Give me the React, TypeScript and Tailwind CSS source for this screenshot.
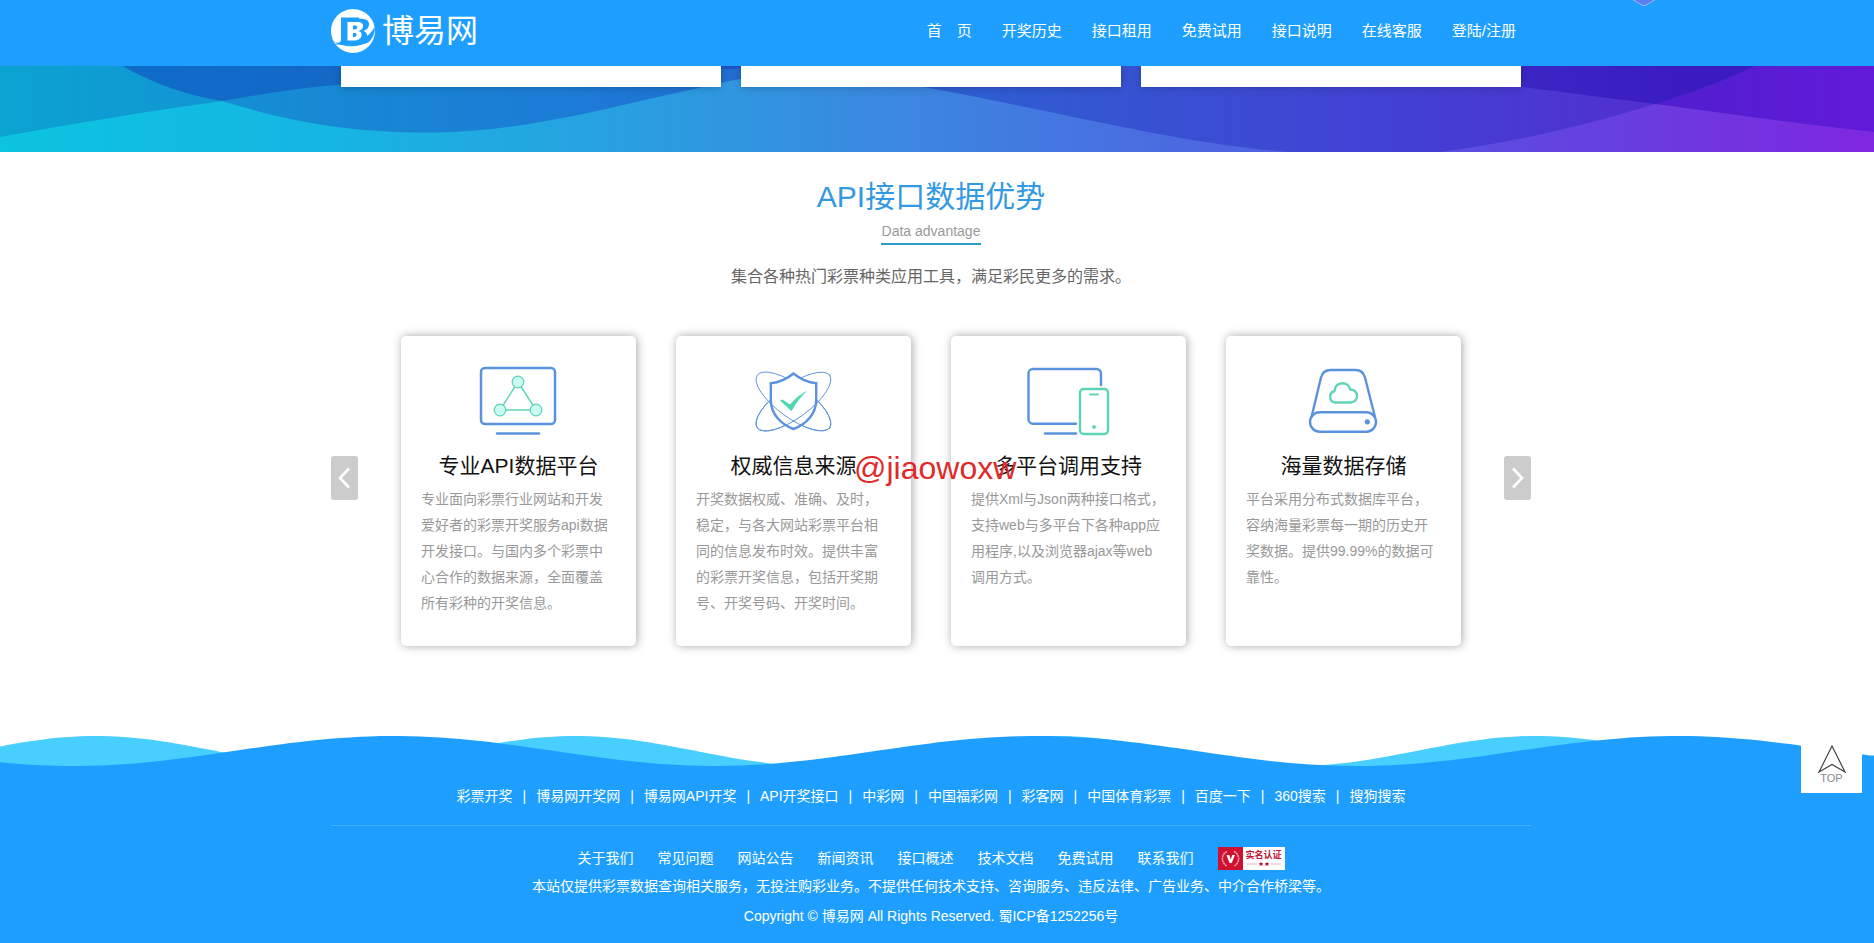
import type { ReactNode } from "react";

const navItems = ["首　页", "开奖历史", "接口租用", "免费试用", "接口说明", "在线客服", "登陆/注册"];

const friendLinks = [
  "彩票开奖",
  "博易网开奖网",
  "博易网API开奖",
  "API开奖接口",
  "中彩网",
  "中国福彩网",
  "彩客网",
  "中国体育彩票",
  "百度一下",
  "360搜索",
  "搜狗搜索",
];

const footerLinks = [
  "关于我们",
  "常见问题",
  "网站公告",
  "新闻资讯",
  "接口概述",
  "技术文档",
  "免费试用",
  "联系我们",
];

const BLUE = "#5b92dd";
const GREEN = "#5fd3b5";

function IconBox({ children }: { children: ReactNode }) {
  return (
    <svg
      viewBox="0 0 100 80"
      className="mx-auto h-20 w-[100px]"
      fill="none"
      strokeLinecap="round"
      strokeLinejoin="round"
      aria-hidden="true"
    >
      {children}
    </svg>
  );
}

function PlatformIcon() {
  return (
    <IconBox>
      <rect x="12" y="8" width="74" height="56" rx="4" stroke={BLUE} strokeWidth="2.5" />
      <path d="M28 73.5H70" stroke={BLUE} strokeWidth="2.4" />
      <path d="M49 22L31 50H67Z" stroke={GREEN} strokeWidth="1.4" />
      <g stroke={GREEN} strokeWidth="1.2" fill="#c9fbf0">
        <circle cx="49" cy="22" r="5.8" />
        <circle cx="31" cy="50" r="5.8" />
        <circle cx="67" cy="50" r="5.8" />
      </g>
    </IconBox>
  );
}

function ShieldIcon() {
  const shield =
    "M49.5 13.5C43.5 18.5 35.5 22.5 26.8 23.2V40C26.8 54 37 64.5 49.5 69C62 64.5 72.2 54 72.2 40V23.2C63.5 22.5 55.5 18.5 49.5 13.5Z";
  const orbits = (
    <g stroke={BLUE} strokeWidth="0.9">
      <ellipse cx="49.5" cy="41.5" rx="44.8" ry="16.4" transform="rotate(36 49.5 41.5)" />
      <ellipse cx="49.5" cy="41.5" rx="44.8" ry="16.4" transform="rotate(-36 49.5 41.5)" />
    </g>
  );
  return (
    <IconBox>
      <clipPath id="shield-lower">
        <rect x="0" y="42" width="100" height="38" />
      </clipPath>
      {orbits}
      <path d={shield} fill="#fff" stroke={BLUE} strokeWidth="2.4" strokeLinejoin="miter" />
      <g clipPath="url(#shield-lower)">{orbits}</g>
      <path d="M36 40.5L38.5 39.5L46 44.5Q53.5 35.5 63.5 30.5Q54 39 47.5 51.3Z" fill="#4fd8b4" />
    </IconBox>
  );
}

function DevicesIcon() {
  return (
    <IconBox>
      <path
        d="M57 63.7H14A4.5 4.5 0 0 1 9.500 59.2V13.5A4.5 4.5 0 0 1 14 9H77.500A4.500 4.500 0 0 1 82 13.500V25"
        stroke={BLUE}
        strokeWidth="2.4"
      />
      <path d="M26 73.5H57" stroke={BLUE} strokeWidth="2.4" />
      <rect x="61" y="29" width="28" height="45" rx="3.5" stroke={GREEN} strokeWidth="2.4" />
      <path d="M71 34.5H79" stroke={GREEN} strokeWidth="2" />
      <circle cx="75" cy="67" r="1.9" fill={GREEN} />
    </IconBox>
  );
}

function StorageIcon() {
  return (
    <IconBox>
      <path
        d="M17.5 57L27 17.5Q29 10 36.5 10H61.5Q69 10 71 17.5L81 57"
        stroke={BLUE}
        strokeWidth="2.4"
      />
      <rect x="16" y="52.3" width="66" height="19.4" rx="9.7" stroke={BLUE} strokeWidth="2.4" />
      <circle cx="73.3" cy="61.8" r="2.6" fill={BLUE} />
      <path
        d="M41 42.5A5.9 5.9 0 0 1 40.5 31C40.5 26.5 44 23.2 48.3 23.2C52.3 23.2 55.5 25.8 56.2 29.5A6.5 6.5 0 1 1 57 42.5Z"
        stroke={GREEN}
        strokeWidth="2.4"
      />
    </IconBox>
  );
}

const advantages = [
  {
    icon: <PlatformIcon />,
    title: "专业API数据平台",
    text: "专业面向彩票行业网站和开发爱好者的彩票开奖服务api数据开发接口。与国内多个彩票中心合作的数据来源，全面覆盖所有彩种的开奖信息。",
  },
  {
    icon: <ShieldIcon />,
    title: "权威信息来源",
    text: "开奖数据权威、准确、及时，稳定，与各大网站彩票平台相同的信息发布时效。提供丰富的彩票开奖信息，包括开奖期号、开奖号码、开奖时间。",
  },
  {
    icon: <DevicesIcon />,
    title: "多平台调用支持",
    text: "提供Xml与Json两种接口格式，支持web与多平台下各种app应用程序,以及浏览器ajax等web调用方式。",
  },
  {
    icon: <StorageIcon />,
    title: "海量数据存储",
    text: "平台采用分布式数据库平台，容纳海量彩票每一期的历史开奖数据。提供99.99%的数据可靠性。",
  },
];

function Logo() {
  return (
    <a href="#home" className="flex items-center gap-[7px] text-white">
      <svg viewBox="0 0 44 44" className="size-11" aria-hidden="true">
        <circle cx="22" cy="22" r="22" fill="#fff" />
        <path d="M10 8.5H28C35 8.5 38.5 11.5 38 16C37.6 19 35.5 21 32.5 22C36 23.5 37 26 35.5 29C33.5 33.5 28 35.5 20 35.5H2.5C6 34.5 9.5 33.5 10 31.5Z" fill="#1e9fff" />
        <path d="M28 8C35 8.5 39 11 41.5 15C38 11.5 35 10 28 9.5Z" fill="#fff" />
        <path d="M2 32C16 38 34 35 44 17.5C44 24 42 29 38 33C28 38.5 12 39 2 32Z" fill="#1e9fff" />
        <path d="M16.5 13H26.5C30.5 13 32.5 14.5 32 17.5C31.6 20 29.8 21.5 27 22C30 22.5 31 24 30.5 26.5C30 30 27 31.5 23 31.5H16.5Z" fill="#fff" />
        <path d="M22 16.5H24.5Q26.5 16.5 26.3 18.5Q26 20.5 24 20.5H22ZM22 24H24Q26 24 25.7 26Q25.3 28 23.3 28H22Z" fill="#1e9fff" />
      </svg>
      <span className="text-[32px] leading-[44px]">博易网</span>
    </a>
  );
}

function Header() {
  return (
    <header className="relative bg-[#1e9fff] pr-3">
      <div className="mx-auto flex h-[66px] max-w-[1200px] items-start justify-between pt-[9px]">
        <Logo />
        <nav className="flex">
          {navItems.map((item) => (
            <a key={item} href="#nav" className="px-[15px] text-[15px] leading-[44px] text-white">
              {item}
            </a>
          ))}
        </nav>
      </div>
      <svg viewBox="0 0 24 7" className="absolute top-0 right-[218px] h-[7px] w-6" aria-hidden="true">
        <path d="M0 -1L10 5Q12 6.5 14 5L24 -1" fill="#5b7cf0" stroke="#a9b6f8" />
      </svg>
    </header>
  );
}

function Banner() {
  const lineA =
    "M0 -20C50 -20 90 -18 122 0C155 18 185 29 222 35C290 56 350 66.5 425 66.5C530 66.5 620 38 690 24C740 12 770 6 800 6C850 6 890 15 940 24C1060 46 1180 78 1290 86H1440C1530 74 1600 55 1655 38C1700 24 1730 12 1755 0L1800 -20H1874V86H0Z";
  const lineB =
    "M0 71C70 58 150 45 222 35C270 27 310 20 350 18C480 8 600 3 721 3C900 -4 1300 -10 1523 21C1570 27 1610 32 1655 38C1730 48 1800 58 1874 66V86H0Z";
  return (
    <section className="relative pr-3">
      <svg
        viewBox="0 0 1874 86"
        preserveAspectRatio="none"
        className="absolute inset-0 h-full w-full"
        aria-hidden="true"
      >
        <defs>
          <linearGradient id="sky" gradientUnits="userSpaceOnUse" x1="0" y1="0" x2="1874" y2="0">
            <stop offset="0.08" stopColor="#0f6cc8" />
            <stop offset="0.2" stopColor="#1468c4" />
            <stop offset="0.4" stopColor="#1f4fc6" />
            <stop offset="0.7" stopColor="#3a35c8" />
            <stop offset="0.9" stopColor="#3a1bc0" />
          </linearGradient>
          <linearGradient id="layer-a" gradientUnits="userSpaceOnUse" x1="0" y1="0" x2="1874" y2="0">
            <stop offset="0" stopColor="#0aa3d0" />
            <stop offset="0.12" stopColor="#1295d4" />
            <stop offset="0.5" stopColor="#3a66d8" />
            <stop offset="0.86" stopColor="#4c20cc" />
            <stop offset="1" stopColor="#611ad8" />
          </linearGradient>
          <linearGradient id="layer-b" gradientUnits="userSpaceOnUse" x1="0" y1="0" x2="1874" y2="0">
            <stop offset="0.1" stopColor="#1490d2" />
            <stop offset="0.3" stopColor="#1c7cd6" />
            <stop offset="0.42" stopColor="#236ad0" />
            <stop offset="0.6" stopColor="#3653d2" />
            <stop offset="0.75" stopColor="#4340d4" />
            <stop offset="0.88" stopColor="#5030cf" />
          </linearGradient>
          <linearGradient id="layer-both" gradientUnits="userSpaceOnUse" x1="0" y1="0" x2="1874" y2="0">
            <stop offset="0" stopColor="#0cc4df" />
            <stop offset="0.18" stopColor="#16b5e2" />
            <stop offset="0.35" stopColor="#2b9de0" />
            <stop offset="0.48" stopColor="#3b87e0" />
            <stop offset="0.62" stopColor="#4a6ce0" />
            <stop offset="0.82" stopColor="#6046df" />
            <stop offset="1" stopColor="#7e27df" />
          </linearGradient>
          <clipPath id="clip-a">
            <path d={lineA} />
          </clipPath>
        </defs>
        <rect width="1874" height="86" fill="url(#sky)" />
        <path d={lineA} fill="url(#layer-a)" />
        <path d={lineB} fill="url(#layer-b)" />
        <path d={lineB} fill="url(#layer-both)" clipPath="url(#clip-a)" />
      </svg>
      <div className="relative mx-auto grid h-[86px] max-w-[1200px] grid-cols-3 gap-5 overflow-hidden px-[10px]">
        <div className="h-[21px] bg-white shadow-[0_0_8px_rgba(0,0,0,0.25)]" />
        <div className="h-[21px] bg-white shadow-[0_0_8px_rgba(0,0,0,0.25)]" />
        <div className="h-[21px] bg-white shadow-[0_0_8px_rgba(0,0,0,0.25)]" />
      </div>
    </section>
  );
}

function ArrowButton({ label, d }: { label: string; d: string }) {
  return (
    <button
      type="button"
      aria-label={label}
      className="mt-[120px] flex h-11 w-[27px] items-center justify-center rounded-[3px] bg-[#ccc]"
    >
      <svg viewBox="0 0 14 24" className="h-6 w-[14px]" fill="none" stroke="#fff" strokeWidth="2.6" aria-hidden="true">
        <path d={d} />
      </svg>
    </button>
  );
}

function Advantages() {
  return (
    <section className="pt-[23px] pr-3 pb-[90px] text-center">
      <h2 className="text-[30px] leading-[44px] text-[#3399e0]">API接口数据优势</h2>
      <p className="mx-auto w-[100px] border-b-2 border-[#2f9ac4] text-sm leading-6 text-[#999]">
        Data advantage
      </p>
      <p className="mt-5 text-base leading-6 text-[#666]">
        集合各种热门彩票种类应用工具，满足彩民更多的需求。
      </p>

      <div className="relative mx-auto mt-[47px] flex max-w-[1200px] items-start justify-between">
        <ArrowButton label="上一页" d="M11 2.5L2 12L11 21.5" />
        <div className="grid grid-cols-4 gap-10">
          {advantages.map((a) => (
            <article
              key={a.title}
              className="h-[310px] w-[235px] rounded-[5px] bg-white px-5 pt-6 shadow-[1px_0_10px_rgba(0,0,0,0.35)]"
            >
              {a.icon}
              <h3 className="mt-[6px] text-[21px] leading-10 text-[#111]">{a.title}</h3>
              <p className="text-left text-sm leading-[26px] text-[#999]">{a.text}</p>
            </article>
          ))}
        </div>
        <ArrowButton label="下一页" d="M2 2.5L11 12L2 21.5" />
        <span className="absolute top-[110px] left-[523px] text-[32px] leading-[44px] text-[#e02a2a]">
          @jiaowoxw
        </span>
      </div>
    </section>
  );
}

// cosine wave filled down to the bottom edge, crest at `crest`
function wavePath(crest: number, period: number) {
  let d = "M0 30";
  for (let x = 0; x <= 1880; x += 10) {
    const y = 15 - 15 * Math.cos(((x - crest) / period) * Math.PI * 2);
    d += `L${x} ${y.toFixed(1)}`;
  }
  return `${d}L1880 30Z`;
}

function RealNameBadge() {
  return (
    <a href="#verify" aria-label="实名认证" className="flex h-[23px] w-[67px] bg-white">
      <svg viewBox="0 0 25 23" className="h-[23px] w-[25px]" aria-hidden="true">
        <rect width="25" height="23" fill="#cf1030" />
        <path d="M9 4.5A8 8 0 0 0 9 19M16 4.5A8 8 0 0 1 16 19" fill="none" stroke="#f0a0ac" strokeWidth="1.6" strokeDasharray="2 0.6" />
        <path d="M8.500 8H11.300L12.700 12.500L14.300 8H17L13.700 16H11.500Z" fill="#fff" />
      </svg>
      <span className="flex flex-1 flex-col items-center pt-[3px]">
        <span className="text-[9px] leading-[11px] font-bold whitespace-nowrap text-[#c41230]">实名认证</span>
        <svg viewBox="0 0 38 5" className="h-[5px] w-[38px]" aria-hidden="true">
          <path d="M2 3H12M26 3H36" stroke="#e6a0a8" strokeWidth="0.8" />
          <path d="M16 1l1 1.2 1.2 0.3-1 1 0.2 1.5-1.4-0.7-1.4 0.7 0.2-1.5-1-1 1.2-0.3zM22 1l1 1.2 1.2 0.3-1 1 0.2 1.5-1.4-0.7-1.4 0.7 0.2-1.5-1-1 1.2-0.3z" fill="#c41230" />
        </svg>
      </span>
    </a>
  );
}

function Footer() {
  return (
    <footer>
      <svg viewBox="0 0 1874 30" preserveAspectRatio="none" className="block h-[30px] w-full" aria-hidden="true">
        <path d={wavePath(96, 480)} fill="#48cfff" />
        <path d={wavePath(394, 642)} fill="#1e9fff" />
      </svg>
      <div className="bg-[#1e9fff] pt-[18px] pr-3 pb-[15px] text-sm leading-6 text-white">
        <div className="mx-auto max-w-[1200px]">
          <div className="flex justify-center gap-[10px]">
            {friendLinks.map((link, i) => (
              <span key={link} className="flex gap-[10px]">
                {i > 0 && <span>|</span>}
                <a href="#friend">{link}</a>
              </span>
            ))}
          </div>
          <hr className="mt-[17px] border-[#45b0ff]" />
          <div className="mt-5 flex items-center justify-center gap-6">
            {footerLinks.map((link) => (
              <a key={link} href="#footer">
                {link}
              </a>
            ))}
            <RealNameBadge />
          </div>
          <p className="mt-1 text-center">
            本站仅提供彩票数据查询相关服务，无投注购彩业务。不提供任何技术支持、咨询服务、违反法律、广告业务、中介合作桥梁等。
          </p>
          <p className="mt-[6px] text-center">Copyright © 博易网 All Rights Reserved. 蜀ICP备1252256号</p>
        </div>
      </div>
    </footer>
  );
}

export default function App() {
  return (
    <div className="bg-white font-['Liberation_Sans','Noto_Sans_CJK_SC',sans-serif]">
      <Header />
      <Banner />
      <Advantages />
      <Footer />
      <button
        type="button"
        className="fixed right-3 bottom-[150px] flex size-[61px] flex-col items-center bg-white pt-3 text-[11px] leading-[10px] text-[#888]"
      >
        <svg viewBox="0 0 30 29" className="h-[29px] w-[30px]" fill="none" stroke="#444" strokeWidth="1.2" aria-hidden="true">
          <path d="M15 2L28 28L15 20.5L2 28Z" />
        </svg>
        TOP
      </button>
    </div>
  );
}
